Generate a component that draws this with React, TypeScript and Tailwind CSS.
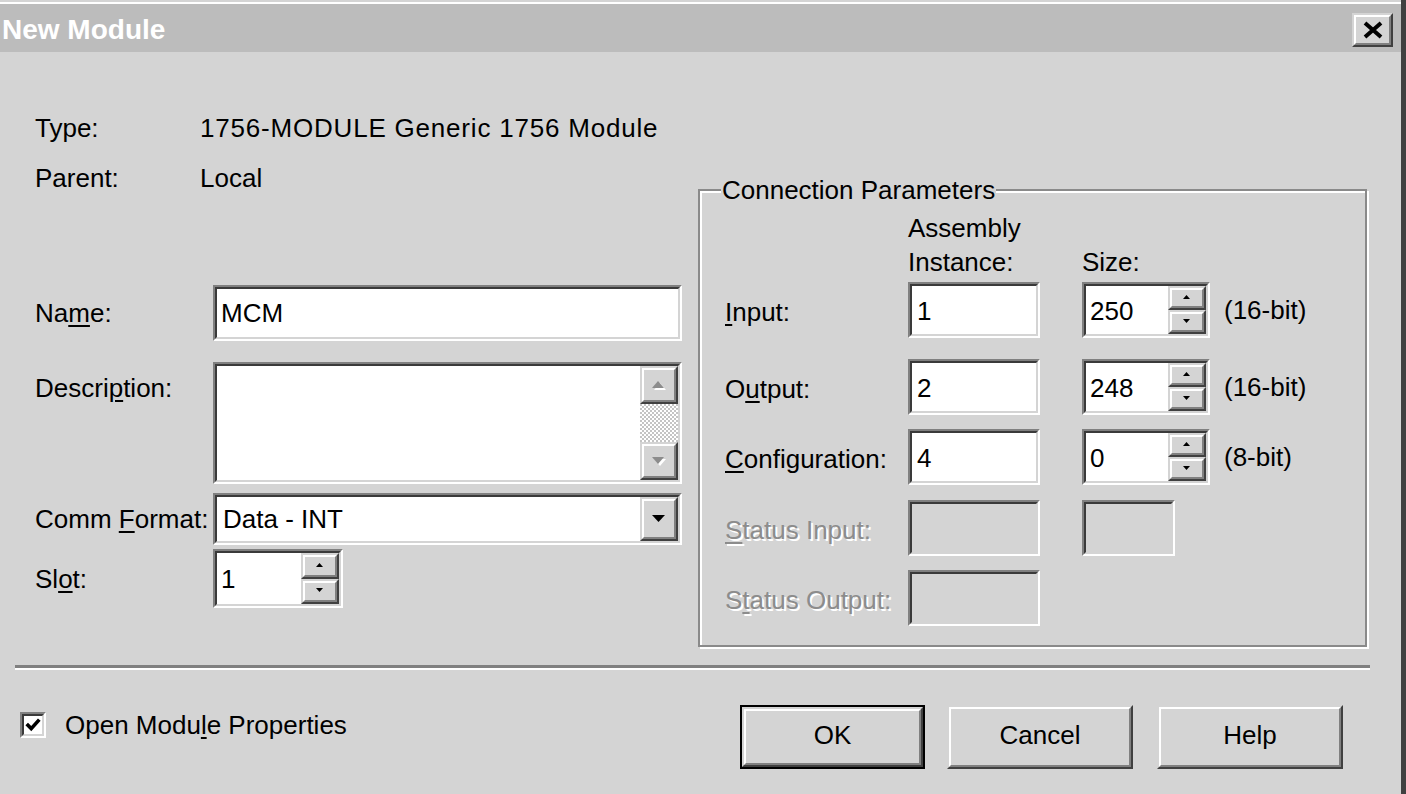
import React from "react";

type P = { className?: string; children?: React.ReactNode };

function Sunken({ className = "", disabled = false, children }: P & { disabled?: boolean }) {
  return (
    <div className={`border-2 border-t-[#808080] border-l-[#808080] border-b-white border-r-white ${className}`}>
      <div
        className={`flex h-full w-full items-center border-2 border-t-[#3a3a3a] border-l-[#3a3a3a] border-b-[#d4d4d4] border-r-[#d4d4d4] ${
          disabled ? "bg-[#d4d4d4]" : "bg-white"
        }`}
      >
        {children}
      </div>
    </div>
  );
}

function Raised({ className = "", children }: P) {
  return (
    <div className={`border-2 border-t-[#d4d4d4] border-l-[#d4d4d4] border-b-[#404040] border-r-[#404040] ${className}`}>
      <div className="flex h-full w-full items-center justify-center border-2 border-t-white border-l-white border-b-[#808080] border-r-[#808080] bg-[#d4d4d4]">
        {children}
      </div>
    </div>
  );
}

function Tri({ dir, w, h, color = "#000", shadow = false }: { dir: "up" | "down"; w: number; h: number; color?: string; shadow?: boolean }) {
  const d = dir === "up" ? `M${w / 2} 0 L${w} ${h} L0 ${h} Z` : `M0 0 L${w} 0 L${w / 2} ${h} Z`;
  return (
    <svg width={w + 2} height={h + 2} viewBox={`0 0 ${w + 2} ${h + 2}`}>
      {shadow && <path d={d} fill="#ffffff" transform="translate(2 2)" />}
      <path d={d} fill={color} />
    </svg>
  );
}

function Spinner() {
  return (
    <div className="flex h-full w-[38px] shrink-0 flex-col self-stretch">
      <Raised className="h-1/2 w-full">
        <Tri dir="up" w={7} h={4} />
      </Raised>
      <Raised className="h-1/2 w-full">
        <Tri dir="down" w={7} h={4} />
      </Raised>
    </div>
  );
}

function U({ children }: P) {
  return <span className="underline decoration-2 underline-offset-[3px]">{children}</span>;
}

const dis = "text-[#8c8c8c] [text-shadow:2px_2px_0_#ffffff]";

function Row({
  label,
  inst,
  size,
  unit,
  disabled = false,
  noSize = false,
  className = "",
}: {
  label: React.ReactNode;
  inst?: string;
  size?: string;
  unit?: string;
  disabled?: boolean;
  noSize?: boolean;
  className?: string;
}) {
  return (
    <div className={`flex h-[56px] items-center ${className}`}>
      <div className={`w-[183px] shrink-0 pt-[4px] ${disabled ? dis : ""}`}>{label}</div>
      <Sunken className="h-full w-[132px] shrink-0" disabled={disabled}>
        <span className="pl-[5px] pt-[2px]">{inst}</span>
      </Sunken>
      {!noSize &&
        (disabled ? (
          <Sunken className="ml-[42px] h-full w-[93px] shrink-0" disabled />
        ) : (
          <>
            <Sunken className="ml-[42px] h-full w-[128px] shrink-0">
              <span className="flex-1 pl-[4px] pt-[2px]">{size}</span>
              <Spinner />
            </Sunken>
            <span className="ml-[14px]">{unit}</span>
          </>
        ))}
    </div>
  );
}

export default function App() {
  return (
    <div className="flex h-[794px] w-[1406px] flex-col overflow-hidden border-r-[5px] border-r-[#404040] bg-[#d4d4d4] pt-[2px] font-['Liberation_Sans',Arial,sans-serif] text-[26px] leading-[30px] text-black">
      {/* Title bar */}
      <div className="flex h-[50px] shrink-0 items-center justify-between border-t-2 border-t-white bg-[#bcbcbc] pl-[2px] pr-[8px] pt-[4px]">
        <span className="text-[28px] font-bold leading-none text-white">New Module</span>
        <Raised className="h-[34px] w-[41px]">
          <svg width="22" height="18" viewBox="0 0 22 18">
            <path d="M3 2 L19 16 M19 2 L3 16" stroke="#000" strokeWidth="4" />
          </svg>
        </Raised>
      </div>

      {/* Body */}
      <div className="flex h-[613px] shrink-0">
        <div className="flex w-[698px] shrink-0 flex-col pl-[35px]">
          <div className="mt-[61px] flex h-[30px]">
            <span className="w-[165px] shrink-0">Type:</span>
            <span className="tracking-[0.8px]">1756-MODULE Generic 1756 Module</span>
          </div>
          <div className="mt-[20px] flex h-[30px]">
            <span className="w-[165px] shrink-0">Parent:</span>
            <span>Local</span>
          </div>

          <div className="mt-[92px] flex h-[56px] items-center">
            <span className="w-[178px] shrink-0">
              Na<U>m</U>e:
            </span>
            <Sunken className="h-full w-[469px]">
              <span className="pl-[4px]">MCM</span>
            </Sunken>
          </div>

          <div className="mt-[21px] flex h-[122px] items-start">
            <span className="w-[178px] shrink-0 pt-[11px]">
              Descri<U>p</U>tion:
            </span>
            <Sunken className="h-full w-[469px]">
              <div className="flex-1" />
              <div className="flex h-full w-[38px] flex-col">
                <Raised className="h-[38px] w-full">
                  <Tri dir="up" w={12} h={7} color="#8c8c8c" shadow />
                </Raised>
                <div className="flex-1 bg-[repeating-conic-gradient(#ffffff_0%_25%,#c4c4c4_0%_50%)] bg-[length:4px_4px]" />
                <Raised className="h-[38px] w-full">
                  <Tri dir="down" w={12} h={7} color="#8c8c8c" shadow />
                </Raised>
              </div>
            </Sunken>
          </div>

          <div className="mt-[9px] flex h-[52px] items-center">
            <span className="w-[178px] shrink-0">
              Comm <U>F</U>ormat:
            </span>
            <Sunken className="h-full w-[469px]">
              <span className="flex-1 pl-[6px]">Data - INT</span>
              <Raised className="h-full w-[38px]">
                <Tri dir="down" w={13} h={7} />
              </Raised>
            </Sunken>
          </div>

          <div className="mt-[4px] flex h-[59px] items-center">
            <span className="w-[178px] shrink-0">
              Sl<U>o</U>t:
            </span>
            <Sunken className="h-full w-[130px]">
              <span className="flex-1 pl-[4px]">1</span>
              <Spinner />
            </Sunken>
          </div>
        </div>

        <fieldset className="mt-[123px] h-[472px] w-[669px] shrink-0 border-2 border-[#8a8a8a] p-0 shadow-[inset_2px_2px_0_#ffffff,2px_2px_0_#ffffff]">
          <legend className="ml-[21px] bg-[#d4d4d4] px-[1px] leading-[30px]">Connection Parameters</legend>
          <div className="flex flex-col pl-[25px] pt-[6px]">
            <div className="flex h-[34px] items-center">
              <span className="w-[183px] shrink-0" />
              <span>Assembly</span>
            </div>
            <div className="flex h-[34px] items-center">
              <span className="w-[183px] shrink-0" />
              <span className="w-[174px] shrink-0">Instance:</span>
              <span>Size:</span>
            </div>
            <Row
              className="mt-[3px]"
              label={
                <>
                  <U>I</U>nput:
                </>
              }
              inst="1"
              size="250"
              unit="(16-bit)"
            />
            <Row
              className="mt-[21px]"
              label={
                <>
                  O<U>u</U>tput:
                </>
              }
              inst="2"
              size="248"
              unit="(16-bit)"
            />
            <Row
              className="mt-[14px]"
              label={
                <>
                  <U>C</U>onfiguration:
                </>
              }
              inst="4"
              size="0"
              unit="(8-bit)"
            />
            <Row
              className="mt-[15px]"
              disabled
              label={
                <>
                  <U>S</U>tatus Input:
                </>
              }
            />
            <Row
              className="mt-[14px]"
              disabled
              noSize
              label={
                <>
                  S<U>t</U>atus Output:
                </>
              }
            />
          </div>
        </fieldset>
      </div>

      {/* Separator */}
      <div className="ml-[15px] h-[5px] w-[1355px] shrink-0 border-t-[3px] border-b-2 border-t-[#808080] border-b-white" />

      {/* Bottom row */}
      <div className="flex flex-1">
        <div className="mt-[40px] flex h-[30px] w-[740px] shrink-0 items-center pl-[20px]">
          <Sunken className="h-[26px] w-[26px] shrink-0">
            <svg width="20" height="20" viewBox="0 0 20 20">
              <path d="M3 9 L8 14 L17 4" stroke="#000" strokeWidth="4" fill="none" />
            </svg>
          </Sunken>
          <span className="ml-[19px]">
            Open Modu<U>l</U>e Properties
          </span>
        </div>
        <div className="mt-[35px] flex h-[64px] items-stretch">
          <div className="w-[185px] border-2 border-black">
            <Raised className="h-full w-full">
              <span className="pb-[4px]">OK</span>
            </Raised>
          </div>
          <Raised className="ml-[22px] w-[186px]">
            <span className="pb-[4px]">Cancel</span>
          </Raised>
          <Raised className="ml-[24px] w-[186px]">
            <span className="pb-[4px]">Help</span>
          </Raised>
        </div>
      </div>
    </div>
  );
}
